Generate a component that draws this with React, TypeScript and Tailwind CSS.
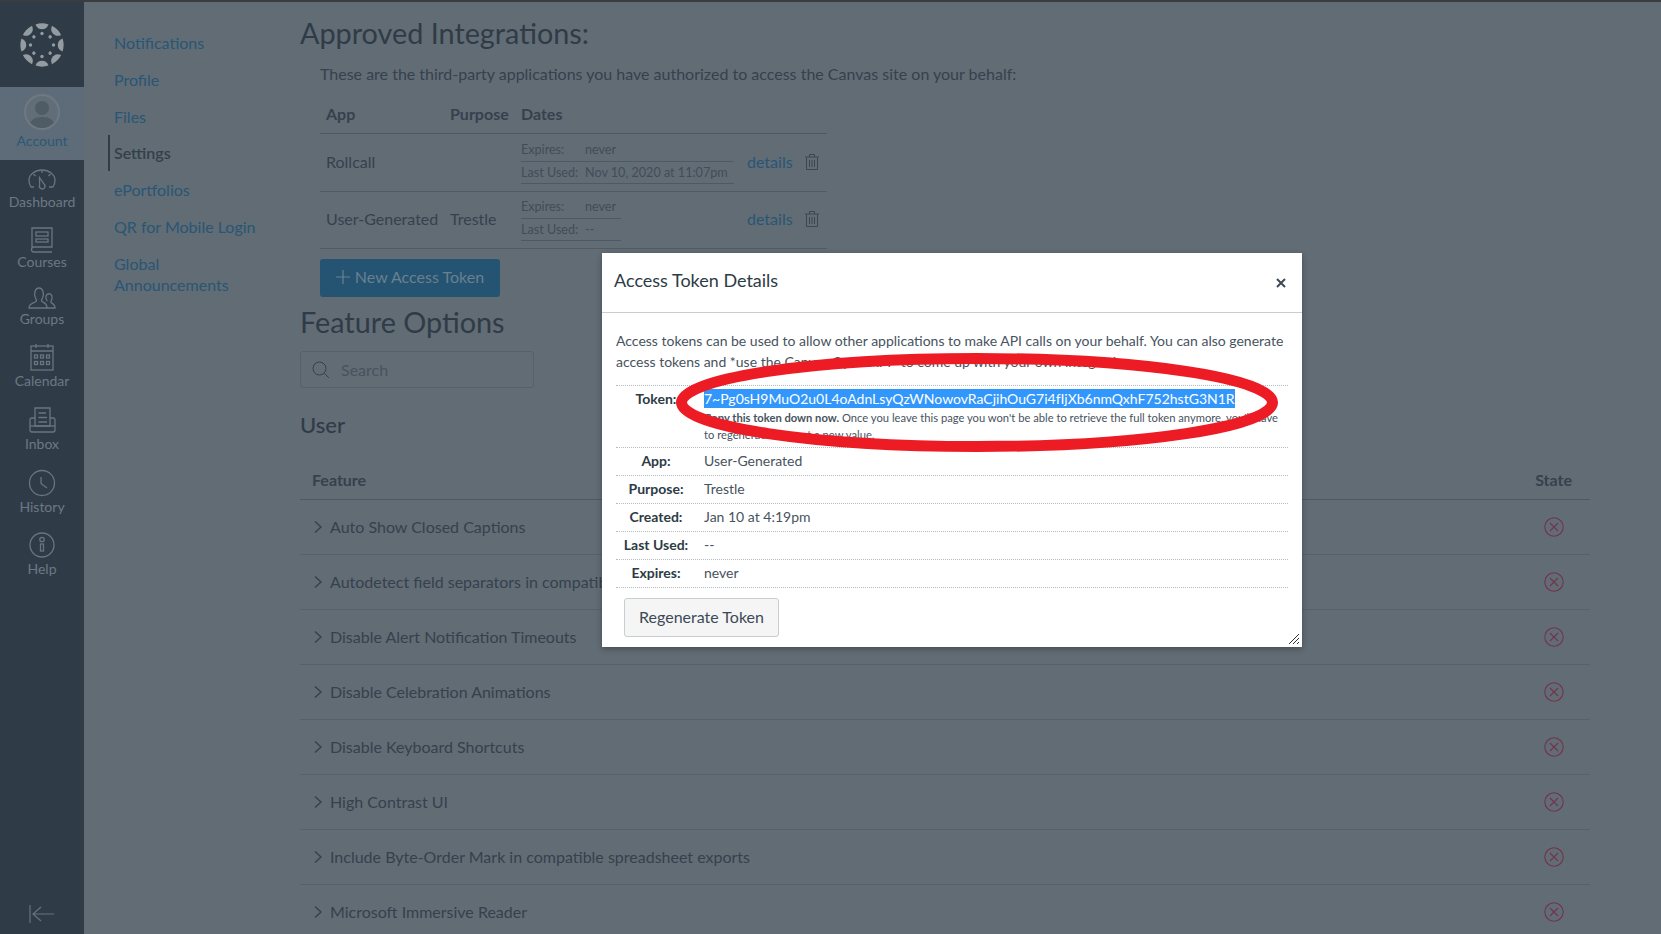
import React from "react";

const Ico = ({ children, size = 32 }: { children: React.ReactNode; size?: number }) => (
  <svg width={size} height={size} viewBox="0 0 32 32" fill="none" stroke="#69757f" strokeWidth="1.3" className="block">
    {children}
  </svg>
);

const Logo = () => {
  const angles = [0, 45, 90, 135, 180, 225, 270, 315];
  return (
    <svg width="44" height="44" viewBox="-22 -22 44 44" className="block">
      {angles.map((a) => (
        <g key={a} transform={`rotate(${a})`} fill="#949ba1">
          <path d="M-6.5 -20.6 A21.5 21.5 0 0 1 6.5 -20.6 C5 -17 3 -15.8 0 -15.8 C-3 -15.8 -5 -17 -6.5 -20.6 Z" />
          <circle cx="0" cy="-11.5" r="1.7" />
        </g>
      ))}
    </svg>
  );
};

const navItems: { label: string; h: string; pt: string; gap: string; icon: React.ReactNode }[] = [
  {
    label: "Dashboard",
    h: "h-[60px]",
    pt: "pt-[4px]",
    gap: "-mt-[4px]",
    icon: (
      <Ico>
        <path d="M8 23 H5 C3.7 21 3 18.5 3 16 C3 10.5 9 6 16 6 C23 6 29 10.5 29 16 C29 18.5 28.3 21 27 23 H23" />
        <path d="M16 6 V9 M7.5 10 L9.5 12 M24.5 10 L22.5 12" />
        <path d="M13.5 13.5 L18 20 A2.8 2.8 0 1 1 13.6 21.2 Z" />
      </Ico>
    ),
  },
  {
    label: "Courses",
    h: "h-[59px]",
    pt: "pt-[4px]",
    gap: "-mt-[4px]",
    icon: (
      <Ico>
        <path d="M6 24 V4 H26 V23 H8 A2.5 2.5 0 0 0 8 28 H26" />
        <rect x="10" y="8" width="12" height="4" />
        <rect x="10" y="15" width="12" height="3" />
      </Ico>
    ),
  },
  {
    label: "Groups",
    h: "h-[59px]",
    pt: "pt-[2px]",
    gap: "-mt-[4px]",
    icon: (
      <Ico>
        <path d="M3 27 C3 22 8 22 10 20.5 C11 19.5 10.5 18.5 9.5 17 C7.5 13 9 7 13 7 C17 7 18.5 13 16.5 17 C15.5 18.5 15 19.5 16 20.5 C18 22 21 22 21 27 Z" />
        <path d="M21 27 H29 C29 23.5 26.5 22.5 25 21.5 C24 20.5 27 19 26 15 C25 12 21 12 20 15 C19.5 17 20.5 19 21.5 20" />
      </Ico>
    ),
  },
  {
    label: "Calendar",
    h: "h-[62px]",
    pt: "pt-[3px]",
    gap: "-mt-[2px]",
    icon: (
      <Ico>
        <rect x="5" y="5" width="22" height="24" />
        <path d="M5 10 H27 M10 3 V7 M22 3 V7" />
        <rect x="8.5" y="14" width="3" height="3" />
        <rect x="14.5" y="14" width="3" height="3" />
        <rect x="20.5" y="14" width="3" height="3" />
        <rect x="8.5" y="20.5" width="3" height="3" />
        <rect x="14.5" y="20.5" width="3" height="3" />
        <rect x="20.5" y="20.5" width="3" height="3" />
      </Ico>
    ),
  },
  {
    label: "Inbox",
    h: "h-[63px]",
    pt: "pt-[4px]",
    gap: "-mt-[2px]",
    icon: (
      <Ico>
        <path d="M9 22 V4 H24 V22 Z" />
        <path d="M12.5 9 H20 M12.5 13.5 H21 M12.5 18 H21" />
        <path d="M9 14 H5.5 C4.5 14 4 15 4 16 V26 C4 27 5 28 6 28 H27 C28 28 29 27 29 26 V16 C29 15 28.5 14 27.5 14 H24" />
        <path d="M4 22 H29" />
      </Ico>
    ),
  },
  {
    label: "History",
    h: "h-[63px]",
    pt: "pt-[4px]",
    gap: "-mt-[2px]",
    icon: (
      <Ico>
        <circle cx="16" cy="16" r="12.5" />
        <path d="M15 10 V16.5 L21 21" />
      </Ico>
    ),
  },
  {
    label: "Help",
    h: "h-[62px]",
    pt: "pt-[3px]",
    gap: "-mt-[2px]",
    icon: (
      <Ico>
        <circle cx="16" cy="16" r="12" />
        <circle cx="16" cy="10.5" r="2.2" />
        <rect x="14.5" y="15" width="3" height="7" />
      </Ico>
    ),
  },
];

const Sidebar = () => (
  <aside className="w-[84px] shrink-0 bg-[#2f3c48] flex flex-col h-full">
    <div className="h-[85px] flex items-center justify-center pt-[1px]">
      <Logo />
    </div>
    <div className="h-[73px] bg-[#5d6c78] flex flex-col items-center pt-[7px]">
      <div className="w-[36px] h-[36px] rounded-full border-2 border-[#6e7983] bg-[#616d77] overflow-hidden flex items-center justify-center">
        <svg width="32" height="32" viewBox="0 0 32 32" className="block">
          <circle cx="16" cy="12" r="7" fill="#4f5b65" />
          <path d="M3 32 C3 24 9 21 16 21 C23 21 29 24 29 32 Z" fill="#4f5b65" />
        </svg>
      </div>
      <span className="text-[14px] leading-[20px] text-[#2b5877] mt-[1px]">Account</span>
    </div>
    <nav className="flex flex-col">
      {navItems.map((n) => (
        <div key={n.label} className={`${n.h} ${n.pt} flex flex-col items-center`}>
          {n.icon}
          <span className={`text-[14px] leading-[20px] text-[#6c7883] ${n.gap}`}>{n.label}</span>
        </div>
      ))}
    </nav>
    <div className="mt-auto h-[30px] flex items-start justify-center">
      <svg width="28" height="20" viewBox="0 0 28 20" fill="none" stroke="#66727c" strokeWidth="1.2" className="block">
        <path d="M2 1 V19 M26 10 H5 M13 3 L5 10 L13 17" />
      </svg>
    </div>
  </aside>
);

const subLinks = ["Notifications", "Profile", "Files", "Settings", "ePortfolios", "QR for Mobile Login"];

const SubNav = () => (
  <div className="w-[216px] shrink-0 pt-[22px] pl-[24px]">
    {subLinks.map((s) => (
      <div
        key={s}
        className={
          s === "Settings"
            ? "h-[36px] flex items-center border-l-2 border-[#303d49] pl-[4px] text-[16px] font-semibold text-[#333f4b]"
            : "h-[37px] flex items-center pl-[6px] text-[16px] text-[#285674]"
        }
      >
        {s}
      </div>
    ))}
    <div className="pl-[6px] pt-[8px] text-[16px] leading-[21px] text-[#285674]">
      Global
      <br />
      Announcements
    </div>
  </div>
);

const Trash = () => (
  <svg width="16" height="18" viewBox="0 0 16 18" fill="none" stroke="#3a4652" strokeWidth="1" className="block">
    <path d="M1 4 H15 M5.5 4 V1.5 H10.5 V4" />
    <path d="M2.5 4.5 V16.5 H13.5 V4.5" />
    <path d="M5.5 7 V14 M8 7 V14 M10.5 7 V14" />
  </svg>
);

const DateRow = ({ label, value, w, nudge }: { label: string; value: string; w: string; nudge?: boolean }) => (
  <div className={`${w} h-[22px] flex items-center border-b border-[#4d5a66] text-[12.6px] text-[#414d59] ${nudge ? "pt-[2px]" : ""}`}>
    <span className="w-[64px] shrink-0">{label}</span>
    <span>{value}</span>
  </div>
);

const IntegrationRow = ({
  app,
  purpose,
  used,
  w,
  h,
  pt,
}: {
  app: string;
  purpose: string;
  used: string;
  w: string;
  h: string;
  pt: string;
}) => (
  <div className={`${h} flex items-center border-b border-[#4f5c68] pb-[2px]`}>
    <div className="w-[130px] pl-[6px] text-[#35414d]">{app}</div>
    <div className="w-[71px] text-[#35414d]">{purpose}</div>
    <div className={`w-[226px] self-start ${pt}`}>
      <DateRow label="Expires:" value="never" w={w} />
      <DateRow label="Last Used:" value={used} w={w} nudge />
    </div>
    <div className="w-[57px] text-[#285674]">details</div>
    <Trash />
  </div>
);

const features = [
  "Auto Show Closed Captions",
  "Autodetect field separators in compatible spreadsheet exports",
  "Disable Alert Notification Timeouts",
  "Disable Celebration Animations",
  "Disable Keyboard Shortcuts",
  "High Contrast UI",
  "Include Byte-Order Mark in compatible spreadsheet exports",
  "Microsoft Immersive Reader",
];

const Main = () => (
  <main className="w-[1290px] shrink-0 pt-[11px]">
    <h2 className="text-[28.8px] leading-[40px] font-normal text-[#2f3b47]">Approved Integrations:</h2>
    <p className="mt-[9px] ml-[20px] text-[16px] leading-[24px] text-[#35414d]">
      These are the third-party applications you have authorized to access the Canvas site on your behalf:
    </p>
    <div className="ml-[20px] w-[507px] mt-[12px]">
      <div className="h-[36px] flex items-center border-b border-[#4c5965] pb-[3px] font-bold text-[16px] text-[#35414d]">
        <div className="w-[130px] pl-[6px]">App</div>
        <div className="w-[71px]">Purpose</div>
        <div>Dates</div>
      </div>
      <IntegrationRow app="Rollcall" purpose="" used="Nov 10, 2020 at 11:07pm" w="w-[213px]" h="h-[58px]" pt="pt-[6px]" />
      <IntegrationRow app="User-Generated" purpose="Trestle" used="--" w="w-[100px]" h="h-[57px]" pt="pt-[5px]" />
      <div className="mt-[10px] w-[180px] h-[38px] rounded-[3px] bg-[#245472] flex items-center justify-center text-[16px] text-[#69808f] pb-[2px]">
        <svg width="14" height="14" viewBox="0 0 14 14" fill="none" stroke="#69808f" strokeWidth="1.2" className="block mr-[5px]">
          <path d="M7 0 V14 M0 7 H14" />
        </svg>
        New Access Token
      </div>
    </div>
    <h2 className="mt-[5px] text-[28.8px] leading-[40px] font-normal text-[#2f3b47]">Feature Options</h2>
    <div className="mt-[9px] w-[234px] h-[37px] rounded-[3px] border border-[#55616c] flex items-center pl-[11px] text-[16px] text-[#47535e]">
      <svg width="18" height="18" viewBox="0 0 18 18" fill="none" stroke="#35414d" strokeWidth="1" className="block mr-[11px]">
        <circle cx="7.5" cy="7.5" r="6.5" />
        <path d="M12.5 12.5 L17 17" />
      </svg>
      Search
    </div>
    <h3 className="mt-[22px] text-[22px] leading-[30px] font-medium text-[#2f3b47]">User</h3>
    <div className="mt-[25px] h-[35px] flex items-center justify-between border-b border-[#4c5965] pb-[4px] font-bold text-[16px] text-[#35414d] pl-[12px] pr-[18px]">
      <span>Feature</span>
      <span>State</span>
    </div>
    {features.map((f) => (
      <div key={f} className="h-[55px] flex items-center justify-between border-b border-[#55626e] text-[16px] text-[#35414d] pl-[13px] pr-[26px]">
        <div className="flex items-center">
          <svg width="10" height="14" viewBox="0 0 10 14" fill="none" stroke="#35414d" strokeWidth="1.4" className="block mr-[7px]">
            <path d="M2 1.5 L8 7 L2 12.5" />
          </svg>
          {f}
        </div>
        <svg width="20" height="20" viewBox="0 0 20 20" fill="none" stroke="#72344c" strokeWidth="1.1" className="block">
          <circle cx="10" cy="10" r="9.2" />
          <path d="M6 6 L14 14 M14 6 L6 14" />
        </svg>
      </div>
    ))}
  </main>
);

const details: [string, string][] = [
  ["App:", "User-Generated"],
  ["Purpose:", "Trestle"],
  ["Created:", "Jan 10 at 4:19pm"],
  ["Last Used:", "--"],
  ["Expires:", "never"],
];

const Modal = () => (
  <div className="absolute left-[602px] top-[253px] w-[700px] h-[394px] bg-white shadow-[0_2px_6px_rgba(0,0,0,0.3)] text-[#2d3b45]">
    <div className="h-[60px] flex items-center justify-between pl-[12px] pr-[16px] border-b border-[#c7cdd1]">
      <span className="text-[18px] pb-[4px]">Access Token Details</span>
      <svg width="10" height="10" viewBox="0 0 10 10" fill="none" stroke="#3d4a55" strokeWidth="2" className="block">
        <path d="M1 1 L9 9 M9 1 L1 9" />
      </svg>
    </div>
    <div className="px-[14px] pt-[17px]">
      <p className="text-[14px] leading-[21px] text-[#47535e]">
        Access tokens can be used to allow other applications to make API calls on your behalf. You can also generate
        access tokens and *use the Canvas Open API* to come up with your own integrations.
      </p>
      <div className="mt-[13px] border-t border-dotted border-[#b5bbc0] h-[62px] flex text-[14px]">
        <div className="w-[80px] shrink-0 text-center font-bold pt-[3px] leading-[20px]">Token:</div>
        <div className="ml-[8px] pt-[3px]">
          <div className="w-fit h-[19px] leading-[19px] bg-[#3297fd] text-white whitespace-nowrap">
            7~Pg0sH9MuO2u0L4oAdnLsyQzWNowovRaCjihOuG7i4fIjXb6nmQxhF752hstG3N1R
          </div>
          <div className="w-[584px] mt-[1px] text-[11.2px] leading-[17px] text-[#47535e]">
            <b>Copy this token down now.</b> Once you leave this page you won&apos;t be able to retrieve the full token
            anymore, you&apos;ll have to regenerate it to get a new value.
          </div>
        </div>
      </div>
      {details.map(([k, v]) => (
        <div key={k} className="h-[28px] flex items-center border-t border-dotted border-[#b5bbc0] text-[14px] pb-[2px]">
          <div className="w-[80px] shrink-0 text-center font-bold">{k}</div>
          <div className="ml-[8px] text-[#47535e]">{v}</div>
        </div>
      ))}
      <div className="border-t border-dotted border-[#b5bbc0] pt-[10px] pl-[8px]">
        <div className="w-[155px] h-[39px] rounded-[3px] border border-[#c7cdd1] bg-[#f5f5f5] flex items-center justify-center text-[16px] text-[#3c4a55] pb-[1px]">
          Regenerate Token
        </div>
      </div>
    </div>
    <svg width="12" height="12" viewBox="0 0 12 12" stroke="#333" strokeWidth="1" className="absolute right-[2px] bottom-[2px]">
      <path d="M1 11 L11 1 M5 11 L11 5 M9 11 L11 9" />
    </svg>
  </div>
);

const RedEllipse = () => (
  <svg width="620" height="110" viewBox="0 0 620 110" className="absolute left-[668px] top-[348px]">
    <ellipse cx="309" cy="54.5" rx="295.5" ry="44" fill="none" stroke="#ed1c24" strokeWidth="11" />
  </svg>
);

export default function App() {
  return (
    <div className="relative w-[1661px] h-[934px] overflow-hidden bg-[#626c75] font-['Lato',sans-serif] border-t-2 border-[#3a3d40] box-border">
      <div className="flex h-full">
        <Sidebar />
        <SubNav />
        <Main />
      </div>
      <div className="absolute left-0 top-[-2px] w-full h-0">
        <div className="relative">
          <Modal />
          <RedEllipse />
        </div>
      </div>
    </div>
  );
}
